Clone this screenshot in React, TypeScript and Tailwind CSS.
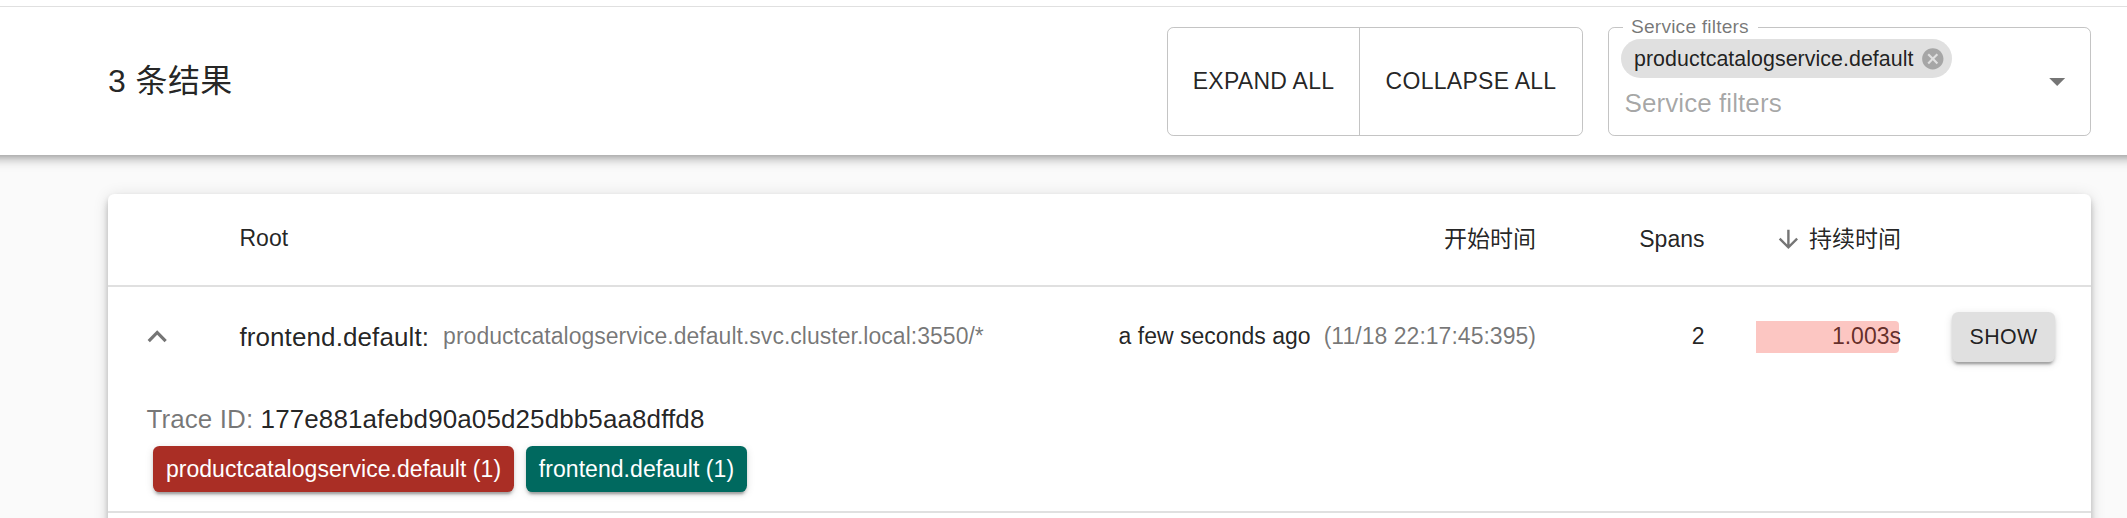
import type { ReactNode } from "react";

function Icon({ d, className }: { d: string; className: string }) {
  return (
    <svg viewBox="0 0 24 24" className={className} fill="currentColor" aria-hidden="true">
      <path d={d} />
    </svg>
  );
}

function ServiceFilter() {
  return (
    <fieldset className="relative mt-[20px] h-[116px] w-[483px] rounded-[6.4px] border border-black/[0.23] pl-[12px]">
      <legend className="ml-[2px] h-[14px] w-[135px] pl-[8px] text-[19.2px] leading-[13px] tracking-[0.00938em] whitespace-nowrap text-black/[0.54]">
        Service filters
      </legend>
      <div className="mt-[5px] flex h-[39px] w-[331px] items-center justify-between rounded-full bg-[#e0e0e0] pr-[6px] pl-[13px]">
        <span className="pt-px text-[21.4px] leading-[39px] tracking-[0.002em] whitespace-nowrap">
          productcatalogservice.default
        </span>
        <Icon
          className="size-[25.6px] shrink-0 text-black/[0.26]"
          d="M12 2C6.47 2 2 6.47 2 12s4.47 10 10 10 10-4.47 10-10S17.53 2 12 2zm5 13.59L15.59 17 12 13.41 8.41 17 7 15.59 10.59 12 7 8.41 8.41 7 12 10.59 15.59 7 17 8.41 13.41 12 17 15.59z"
        />
      </div>
      <div className="mt-[10px] pl-[3.5px] text-[26px] leading-[30px] tracking-[0.003em] text-black/[0.36]">
        Service filters
      </div>
      <Icon className="absolute top-[28px] right-[14px] size-[38.4px] text-black/[0.54]" d="M7 10l5 5 5-5z" />
    </fieldset>
  );
}

function ServiceChip({ className, children }: { className: string; children: ReactNode }) {
  return (
    <div
      className={`flex h-[46px] items-center justify-center rounded-[6.4px] text-[23px] leading-[42px] tracking-[0.002em] whitespace-nowrap text-white shadow-[0_5px_2px_-3px_rgba(0,0,0,0.2),0_3px_3px_0_rgba(0,0,0,0.14),0_2px_8px_0_rgba(0,0,0,0.12)] ${className}`}
    >
      <span className="pb-px">{children}</span>
    </div>
  );
}

export default function App() {
  return (
    <div className="flex h-[518px] flex-col overflow-hidden bg-[#fafafa] font-['Liberation_Sans','Noto_Sans_CJK_SC',sans-serif] text-black/[0.87]">
      <header className="relative mx-[-20px] flex h-[155px] shrink-0 items-start bg-white pr-[56px] pl-[128px] shadow-[0_3px_6px_-2px_rgba(0,0,0,0.2),0_6px_8px_0_rgba(0,0,0,0.14),0_2px_16px_0_rgba(0,0,0,0.12)]">
        <div className="absolute top-[6px] left-0 h-px w-full bg-[#e0e0e0]" />
        <h1 className="mt-[60px] flex-1 text-[32px] leading-[42px] tracking-[0.013em]">3 条结果</h1>
        <div className="mt-[27px] flex h-[109px] w-[416px] rounded-[6.4px] border border-black/[0.23] text-[23px] leading-[106px] tracking-[0.012em] whitespace-nowrap">
          <button className="w-[192px] border-r border-black/[0.23] pb-[2px]">EXPAND ALL</button>
          <button className="flex-1 pb-[2px]">COLLAPSE ALL</button>
        </div>
        <div className="ml-[25px]">
          <ServiceFilter />
        </div>
      </header>

      <main className="mt-[39px] mr-[36px] ml-[108px] h-[400px] shrink-0 rounded-[6.4px] bg-white text-[23px] whitespace-nowrap shadow-[0_3px_6px_-2px_rgba(0,0,0,0.2),0_6px_8px_0_rgba(0,0,0,0.14),0_2px_16px_0_rgba(0,0,0,0.12)]">
        <div className="flex h-[93px] items-center border-b-2 border-[#e0e0e0] pb-[2px] leading-[32px]">
          <span className="w-[1298px] pb-px pl-[131.5px]">Root</span>
          <span className="w-[130px] pt-px text-right">开始时间</span>
          <span className="w-[168.5px] text-right">Spans</span>
          <div className="flex w-[196.5px] items-center justify-end gap-[6px] pt-px">
            <Icon
              className="size-[28.8px] text-black/[0.54]"
              d="M20 12l-1.41-1.41L13 16.17V4h-2v12.17l-5.58-5.59L4 12l8 8 8-8z"
            />
            <span>持续时间</span>
          </div>
        </div>
        <section className="h-[226px] border-b-2 border-[#e0e0e0]">
          <div className="flex h-[100px] items-center leading-[32px]">
            <Icon
              className="ml-[30px] size-[38.4px] shrink-0 -translate-y-[0.5px] text-black/[0.54]"
              d="M12 8l-6 6 1.41 1.41L12 10.83l4.59 4.58L18 14z"
            />
            <div className="ml-[63px] flex w-[800px] items-baseline gap-[14px] pt-px">
              <span className="text-[26px] tracking-[0.004em]">frontend.default:</span>
              <span className="-translate-y-[2px] tracking-[0.001em] text-black/[0.54]">
                productcatalogservice.default.svc.cluster.local:3550/*
              </span>
            </div>
            <div className="flex flex-1 justify-end gap-[13px] pb-[2px] tracking-[0.001em]">
              <span>a few seconds ago</span>
              <span className="text-black/[0.54]">(11/18 22:17:45:395)</span>
            </div>
            <span className="w-[168.5px] pb-[2px] text-right">2</span>
            <div className="relative ml-[51.5px] w-[145px] pb-[2px] text-right">
              1.003s
              <div className="absolute top-px left-0 h-[32px] w-[143px] rounded-r-[4px] bg-[#f44336]/30" />
            </div>
            <button className="mr-[36px] ml-[51px] h-[50px] w-[103px] rounded-[6.4px] bg-[#e0e0e0] pb-px text-[21.4px] tracking-[0.016em] shadow-[0_5px_2px_-3px_rgba(0,0,0,0.2),0_3px_3px_0_rgba(0,0,0,0.14),0_2px_8px_0_rgba(0,0,0,0.12)]">
              SHOW
            </button>
          </div>
          <div className="mt-[13px] pl-[38.4px] text-[26px] leading-[38px] tracking-[0.004em]">
            <span className="text-black/[0.54]">Trace ID:</span> 177e881afebd90a05d25dbb5aa8dffd8
          </div>
          <div className="mt-[8px] ml-[45px] flex gap-[12px]">
            <ServiceChip className="w-[361px] bg-[#aa2e25]">productcatalogservice.default (1)</ServiceChip>
            <ServiceChip className="w-[221px] bg-[#00695f]">frontend.default (1)</ServiceChip>
          </div>
        </section>
      </main>
    </div>
  );
}
